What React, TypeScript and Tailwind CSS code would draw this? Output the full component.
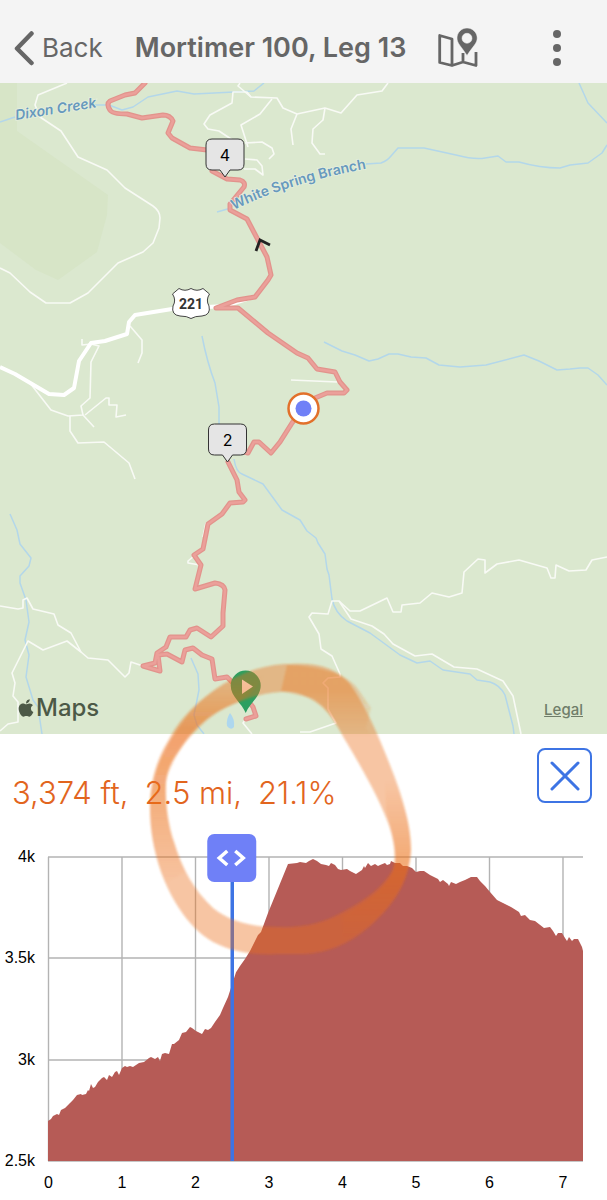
import { useState } from "react";
import { FaApple } from "react-icons/fa";

// chart scale, in svg units
const X0 = 48.5;
const Y0 = 1161;
const PX_PER_MILE = 73.5;
const PX_PER_FOOT = 101.4 / 500;

const MILES = [0, 1, 2, 3, 4, 5, 6, 7];
const ELEVATIONS = [
  { label: "4k", y: 857 },
  { label: "3.5k", y: 958 },
  { label: "3k", y: 1060 },
  { label: "2.5k", y: 1161 },
];

const PROFILE: [number, number][] = [
  [48, 1121], [51, 1119], [53, 1116], [57, 1114], [59, 1115], [61, 1110], [65, 1108], [70, 1103],
  [73, 1100], [77, 1095], [81, 1094], [82, 1095], [86, 1094], [88, 1090], [89, 1091], [91, 1084],
  [93, 1088], [95, 1087], [98, 1082], [102, 1078], [104, 1077], [107, 1080], [109, 1075], [112, 1077],
  [115, 1072], [117, 1071], [119, 1075], [122, 1068], [125, 1066], [127, 1067], [130, 1066], [133, 1067],
  [139, 1063], [144, 1062], [149, 1058], [151, 1057], [155, 1059], [158, 1057], [160, 1061], [162, 1054],
  [165, 1053], [169, 1054], [172, 1044], [174, 1044], [179, 1040], [182, 1033], [186, 1032], [190, 1027],
  [192, 1028], [196, 1031], [202, 1034], [205, 1029], [208, 1030], [211, 1028], [215, 1022], [220, 1015],
  [223, 1008], [228, 996.9], [236, 972.3], [240, 966], [245, 959], [250, 951], [258, 935], [261, 932],
  [268, 913], [288, 864], [297, 863], [300, 862], [306, 863], [309, 861], [313, 859], [317, 861],
  [321, 864], [326, 865], [329, 866], [331, 863], [335, 865], [338, 869], [341, 870], [347, 869],
  [350, 871], [356, 874], [362, 870], [364, 866], [365, 868], [368, 863], [371, 866], [375, 864],
  [378, 866], [380, 865], [385, 863], [387, 865], [390, 864], [391, 861], [395, 863], [400, 863],
  [403, 866], [407, 866], [412, 868], [416, 872], [420, 871], [424, 871], [430, 875], [438, 879],
  [440, 882], [443, 880], [448, 884], [449, 886], [451, 882], [456, 884], [460, 882], [465, 880],
  [471, 877], [477, 877], [480, 881], [485, 886], [490, 892], [497, 900], [503, 903], [511, 907],
  [519, 912], [521, 916], [525, 915], [530, 920], [535, 921], [544, 928], [550, 927], [553, 931],
  [556, 936], [558, 933], [562, 933], [565, 938], [567, 941], [569, 937], [572, 941], [574, 939],
  [578, 939], [580, 943], [582, 947], [583, 951],
];

const ROADS = [
  "M67 83 L38 95 L35 105 L40 117 L61 131 L78 157 L107 170 L125 188 L153 206 Q160 211 160 218 L159 228 L153 243 L143 252 L118 263 L88 293 L70 303 L46 303 L30 292 L10 273 L0 268",
  "M240 83 L238 86 L251 97 L277 98 L283 108 L297 114 L325 108 L341 113 L357 95 L382 91 L388 83",
  "M251 97 L247 92 L233 92 L232 103 L210 115 L204 124 L208 129 L219 131 L240 145",
  "M272 99 L260 114 L241 125 L248 147 M245 143 L262 142 L272 148 L274 154 L269 159",
  "M245 159 L257 160 L262 166 L263 175 L255 169 L244 169",
  "M297 114 L291 129 L293 145 M325 108 L323 120 L313 129 L312 143 L320 154 L325 154",
  "M30 383 L51 410 L68 416 L83 415 L81 406 L90 398 L91 362 L99 346 L91 344 L82 345 L82 339",
  "M70 416 L70 431 L78 443 L104 442 L129 463 L135 479 M83 415 L94 427 M85 415 L106 398 L109 398 L109 405 L117 405 L116 417 L126 415",
  "M130 326 L142 340 L142 353 L138 363 M291 380 L337 382",
  "M0 606 L18 609 L23 608 L23 600 L27 598 L33 609 L54 614 L58 625 L71 633 L81 652 L88 658 L108 660 L125 677 L129 673 L131 662 L143 666",
  "M81 652 L67 641 L43 650 L28 641 L12 673 L15 683 L13 696 L18 702 L18 722 L8 724 L0 731",
  "M206 523 L203 537 M194 556 L188 561 L188 563 L200 565",
  "M607 557 L592 560 L586 570 L569 571 L556 565 L555 578 L551 578 L547 568 L519 560 L497 564 L485 573 L485 560 L478 559 L464 572 L462 593 L449 597 L432 593 L420 603 L402 605 L401 612 L393 612 L387 598 L360 611 L350 611 L339 601 L332 601 L328 614 L312 613 L309 617 L319 634 L321 649 L332 656 L340 674 L340 677 L328 678 L323 683 L328 688 L328 709 L336 723 L310 732 L300 732",
  "M339 601 L351 619 L372 626 L384 634 L393 644 L415 656 L432 654 L454 667 L477 669 L503 681 L513 696 L521 734",
  "M246 719 L243 723 L252 734",
];

const STREAMS = [
  "M0 122 L15 117 M95 105 L109 105 L122 110 L133 107 L148 97 L177 91 L194 94 L254 91 L264 83",
  "M217 212 L231 208 M366 164 L381 163 Q387 161 391 156 L398 148 L424 148 L456 155 Q475 160 485 158 L498 156 L506 162 L519 162 Q540 168 560 168 L570 165 L588 163 L602 153 L607 145 M579 83 L588 103 L607 123",
  "M324 342 L342 351 L355 355 L369 361 L378 359 L389 354 L398 354 L411 357 L426 358 L439 365 L460 367 L486 365 L524 355 L539 361 L557 370 L570 369 L580 368 L588 368 L598 375 L607 385",
  "M202 336 Q207 362 215 383 L219 407 L219 425 M234 459 Q236 472 242 474 L263 484 L282 510 L300 520 L307 531 L316 538 L318 543 L325 554 L327 569 L329 575 L332 599 Q335 613 347 621 L370 633 L385 644 L400 655 L417 663 L430 661 L443 670 L470 674 L477 680 L490 682 Q500 685 505 695 L513 726 L514 734",
  "M10 514 L17 530 L20 544 L31 558 L29 566 L20 576 L20 583 L26 600 L29 622 L25 640 L29 655 L26 677 L33 700 L38 707 L42 734",
  "M191 658 L198 674 L199 690 L194 715 L197 725 L204 734",
];

const ROUTE = [
  "M145 83 L135 93 L125 95 L110 101 Q106 104 110 110 Q112 114 127 114 L142 118 L163 115 Q170 115 173 121 L168 133 L172 138 L190 148 L207 150 L218 160 L212 171 L227 179 L240 180 Q246 182 244 187 L230 204 L230 210 L247 219 L258 240 L267 257 L271 275 L268 280 L255 297 L237 300 L216 308 L238 308 L268 333 L297 353 L308 358 L317 369 L335 372 L340 382 L347 390 L344 393 L327 393 L315 398 L303 408 L292 423 L280 442 L271 453 L259 442 L254 442 L248 453 L238 450",
  "M228 462 L237 480 L239 492 L245 500 L243 502 L230 503 L222 514 L208 524 L203 549 L194 555 L201 565 L195 589 L215 583 Q224 584 225 590 L223 613 L223 626 L211 637 L197 628 L190 630 L186 637 L170 637 L166 647 L157 653 L155 663 L143 666 L160 671 L158 655 L167 654 L182 662 L185 650 L193 648 L202 655 L212 659 L215 679 L227 677 L240 690 L253 707 L256 716 L246 719",
];

function elevationAt(mile: number) {
  const x = X0 + mile * PX_PER_MILE;
  const found = PROFILE.findIndex((p) => p[0] > x);
  const i = found < 1 ? PROFILE.length - 1 : found;
  const [x1, y1] = PROFILE[i - 1];
  const [x2, y2] = PROFILE[i];
  const y = y1 + ((y2 - y1) * (x - x1)) / (x2 - x1);
  const feet = 2500 + (Y0 - y) / PX_PER_FOOT;
  const rise = (y1 - y2) / PX_PER_FOOT;
  const run = ((x2 - x1) / PX_PER_MILE) * 5280;
  return { feet: Math.round(feet), grade: (rise / run) * 100 };
}

function Header() {
  return (
    <header className="flex h-[83px] items-center bg-[#f4f4f4] pt-3 pl-3.5 pr-10 text-[#666]">
      <button type="button" className="flex items-center gap-2 text-[26px] leading-8">
        <svg className="h-9 w-5" viewBox="0 0 20 36" fill="none" stroke="currentColor" strokeWidth="4.500" strokeLinecap="round" strokeLinejoin="round" aria-hidden="true">
          <path d="M17.500 3.500 L3 18.500 L17.500 33" />
        </svg>
        Back
      </button>
      <h1 className="ml-8 whitespace-nowrap text-[27px] font-semibold leading-8">Mortimer 100, Leg 13</h1>
      <button type="button" aria-label="Map view" className="ml-8">
        <svg className="h-10 w-10" viewBox="440 27 40 40" aria-hidden="true">
          <path
            d="M441.700 34.500 L454 38 V64.500 L441.700 61.500 Z M454 64.500 L465 61 L478 64.500 V51 M465 61 V52"
            fill="none"
            stroke="currentColor"
            strokeWidth="2.800"
            strokeLinejoin="round"
          />
          <path
            d="M469 27 C463.500 27 459 31.500 459 37 C459 42.500 463 45 469 54.500 C475 45 479.200 42.500 479.200 37 C479.200 31.500 474.500 27 469 27 Z M469 32.300 A5 5 0 1 1 469 42.300 A5 5 0 1 1 469 32.300 Z"
            fill="currentColor"
            stroke="#f4f4f4"
            strokeWidth="0.500"
            fillRule="evenodd"
          />
        </svg>
      </button>
      <button type="button" aria-label="More" className="ml-auto flex w-5 flex-col items-center gap-[6px]">
        <span className="size-2 rounded-full bg-current" />
        <span className="size-2 rounded-full bg-current" />
        <span className="size-2 rounded-full bg-current" />
      </button>
    </header>
  );
}

function MileMarker({ x, y, mile }: { x: number; y: number; mile: number }) {
  return (
    <g transform={`translate(${x} ${y})`}>
      <path
        d="M-13 -38 H13 Q19 -38 19 -32 V-13 Q19 -7 13 -7 H5 L0 0 L-5 -7 H-13 Q-19 -7 -19 -13 V-32 Q-19 -38 -13 -38 Z"
        fill="#e5e5e5"
        stroke="#333"
      />
      <text x="0" y="-16" textAnchor="middle" className="fill-black text-[16px]">
        {mile}
      </text>
    </g>
  );
}

function RouteMap() {
  return (
    <section className="relative">
      <svg className="block w-full" viewBox="0 83 607 651" role="img" aria-label="Route map">
        <defs>
          <path id="spring-branch" d="M234 210 Q288 183 370 168" />
        </defs>
        <rect y="83" width="607" height="651" fill="#dbe8cf" />
        <path d="M0 83 H17 V131 L108 195 L107 215 L97 252 L58 280 L36 270 L0 243 Z" fill="#d7e5c7" />
        <g fill="none" stroke="#b3d7ea" strokeWidth="1.500" strokeLinejoin="round">
          {STREAMS.map((d) => (
            <path key={d} d={d} />
          ))}
        </g>
        <path d="M230 713 Q226 719 227 726 Q231 731 234 727 Q235 719 230 713 Z" fill="#aed7ee" />
        <g fill="none" stroke="#f8faf5" strokeWidth="1.600" strokeLinejoin="round">
          {ROADS.map((d) => (
            <path key={d} d={d} />
          ))}
        </g>
        <path
          d="M0 367 L15 374 L49 394 L64 395 L74 388 L79 361 L91 343 L105 341 L127 334 L129 322 L135 315 L172 309 L225 306 L253 297"
          fill="none"
          stroke="#fff"
          strokeWidth="4"
          strokeLinejoin="round"
        />
        <g fill="none" strokeLinejoin="round" strokeLinecap="round">
          {ROUTE.map((d) => (
            <path key={d} d={d} stroke="#e2938c" strokeWidth="5" />
          ))}
          {ROUTE.map((d) => (
            <path key={d} d={d} stroke="#eba09a" strokeWidth="2.500" />
          ))}
        </g>
        <path d="M256 251 L260 240 L270 245" fill="none" stroke="#222" strokeWidth="2.800" />

        <g className="fill-[#6799bd] text-[14px] font-semibold" stroke="#e6efdf" strokeWidth="1.500" paintOrder="stroke">
          <text transform="translate(16 120) rotate(-9)" className="italic">
            Dixon Creek
          </text>
          <text>
            <textPath href="#spring-branch">White Spring Branch</textPath>
          </text>
        </g>

        <path
          d="M179 288.500 Q185 292 191 288.500 Q197 292 203 288.500 L209.500 294 Q205.500 300 209 306 Q211 315 202 316 Q195 316 191 318.500 Q187 316 180 316 Q171 315 173 306 Q176.500 300 172.500 294 Z"
          fill="#fff"
          stroke="#444"
        />
        <text x="191" y="308.500" textAnchor="middle" className="fill-[#333] font-['Roboto',sans-serif] text-[14px] font-bold">
          221
        </text>

        <MileMarker x={225} y={177} mile={4} />
        <MileMarker x={227.5} y={462} mile={2} />

        <circle cx="303.500" cy="408.500" r="15" fill="#fff" stroke="#e2702a" strokeWidth="2.500" />
        <circle cx="303.500" cy="408.500" r="8" fill="#6f80f7" />

        <path
          d="M245.700 713 C242 703 230.700 697 230.700 685.500 A15 15 0 0 1 260.700 685.500 C260.700 697 249.500 703 245.700 713 Z"
          fill="#2c9f60"
        />
        <path d="M242 679.500 L253 686.500 L242 694 Z" fill="#fff" />
      </svg>
      <div className="absolute bottom-2.5 left-4 flex items-center text-[24px] font-medium leading-8 text-[#4c5947]">
        <FaApple className="size-5" aria-hidden="true" />
        <span>Maps</span>
      </div>
      <a href="#legal" className="absolute bottom-3 right-6 text-[15px] font-medium leading-6 text-[#6f7d69] underline">
        Legal
      </a>
    </section>
  );
}

function ElevationChart({ mile, onChange }: { mile: number; onChange: (mile: number) => void }) {
  const x = X0 + mile * PX_PER_MILE;
  const area = "M48 1161 " + PROFILE.map(([px, py]) => `L${px} ${py}`).join(" ") + " V1161 Z";

  return (
    <div className="relative">
      <svg className="block w-full" viewBox="0 803 607 397" role="img" aria-label="Elevation profile">
        <g stroke="#b3b3b3" strokeWidth="1.400">
          {ELEVATIONS.map((e) => (
            <line key={e.label} x1="48" x2="583" y1={e.y} y2={e.y} />
          ))}
          {MILES.map((m) => (
            <line key={m} x1={X0 + m * PX_PER_MILE} x2={X0 + m * PX_PER_MILE} y1="857" y2="1161" />
          ))}
        </g>
        <path d={area} fill="#b65b56" />
        <g className="fill-black font-['Liberation_Sans',Arial,sans-serif] text-[16px]">
          {ELEVATIONS.map((e) => (
            <text key={e.label} x="35" y={e.y + 5} textAnchor="end">
              {e.label}
            </text>
          ))}
          {MILES.map((m) => (
            <text key={m} x={X0 + m * PX_PER_MILE} y="1188" textAnchor="middle">
              {m}
            </text>
          ))}
        </g>
        <line x1={x} x2={x} y1="858" y2="1161" stroke="#3d74e4" strokeWidth="3.500" />
        <rect x={x - 25} y="834" width="49" height="48" rx="7" fill="#6f80f7" />
        <path
          transform={`translate(${x - 1} 858)`}
          d="M-4 -7 L-12 0 L-4 7 M4 -7 L12 0 L4 7"
          fill="none"
          stroke="#fff"
          strokeWidth="3.500"
        />
      </svg>
      <input
        type="range"
        aria-label="Position along route"
        min={0}
        max={7.27}
        step={0.01}
        value={mile}
        onChange={(e) => onChange(Number(e.target.value))}
        className="absolute top-[30px] left-[4%] h-12 w-[96%] cursor-ew-resize opacity-0"
      />
    </div>
  );
}

// Hand-drawn highlight laid over the map and the chart
function Highlight() {
  return (
    <svg className="pointer-events-none absolute top-0 left-0 w-full" viewBox="0 0 607 1200" fill="#ec6f1a" aria-hidden="true">
      <defs>
        <filter id="soft" x="-10%" y="-10%" width="120%" height="120%">
          <feGaussianBlur stdDeviation="1.200" />
        </filter>
        <linearGradient id="fade-left" x1="0" y1="675" x2="0" y2="890" gradientUnits="userSpaceOnUse">
          <stop offset="0" stopColor="#ec6f1a" stopOpacity="0" />
          <stop offset="0.250" stopColor="#ec6f1a" stopOpacity="0.420" />
          <stop offset="0.500" stopColor="#ec6f1a" stopOpacity="0.300" />
          <stop offset="1" stopColor="#ec6f1a" stopOpacity="0" />
        </linearGradient>
        <linearGradient id="fade-top" x1="0" y1="690" x2="0" y2="738" gradientUnits="userSpaceOnUse">
          <stop offset="0" stopColor="#ec6f1a" stopOpacity="0.280" />
          <stop offset="1" stopColor="#ec6f1a" stopOpacity="0" />
        </linearGradient>
        <linearGradient id="fade-right" x1="0" y1="780" x2="0" y2="940" gradientUnits="userSpaceOnUse">
          <stop offset="0" stopColor="#ec6f1a" stopOpacity="0" />
          <stop offset="0.500" stopColor="#ec6f1a" stopOpacity="0.300" />
          <stop offset="1" stopColor="#ec6f1a" stopOpacity="0" />
        </linearGradient>
      </defs>
      <g filter="url(#soft)">
        <path
          fillRule="evenodd"
          opacity="0.400"
          d="M290 664 C318 662 337 668 350 684 C364 703 378 734 390 765 C399 788 411 820 411 850 C409 885 391 907 370 926 C350 944 326 953 305 954 L277 954 C255 955 235 953 213 942 C186 926 170 896 161 872 C153 848 150 828 150 807 C150 785 155 762 168 741 C177 723 190 709 205 697 C229 678 258 664 290 664 Z
             M280 692 C260 693 242 700 227 707 C207 716 194 728 183 744 C174 757 167 767 166 782 C165 805 168 826 174 842 C182 869 194 890 213 908 C232 923 255 927 277 927 C302 928 322 924 343 912 C366 900 384 886 392 871 C398 858 393 835 387 820 C377 794 361 767 347 743 C335 722 328 707 307 697 C298 692 290 691 280 692 Z"
        />
        <path
          fill="url(#fade-left)"
          d="M270 667 C240 672 210 691 193 709 C174 731 151 765 150 807 C150 840 158 864 166 883 L186 872 C172 845 164 805 166 782 C170 760 194 724 227 707 C242 700 250 696 258 684 Z"
        />
        <path
          fill="url(#fade-right)"
          d="M384 765 C400 790 411 820 411 850 C409 885 391 907 370 926 L343 940 L343 916 C366 903 387 888 394 868 C398 855 393 835 386 810 Z"
        />
        <path fill="url(#fade-top)" d="M287 665 C315 666 345 672 357 688 L371 708 L366 728 L372 738 L344 738 C332 715 318 697 307 697 L281 691 Z" />
      </g>
    </svg>
  );
}

export default function App() {
  const [mile, setMile] = useState(2.5);
  const { feet, grade } = elevationAt(mile);

  return (
    <main className="relative overflow-hidden bg-white font-['Inter',sans-serif]">
      <Header />
      <RouteMap />
      <section>
        <div className="flex items-end justify-between pt-3.5 pr-[15px] pl-3">
          <p className="flex gap-4 whitespace-nowrap text-[31px] leading-5 font-light text-[#e2651e]">
            <span>{feet.toLocaleString("en-US")} ft,</span>
            <span>{mile.toFixed(1)} mi,</span>
            <span>{grade.toFixed(1)}%</span>
          </p>
          <button
            type="button"
            aria-label="Close elevation profile"
            className="flex size-[55px] items-center justify-center rounded-lg border-2 border-[#3d74e4] text-[#3d74e4]"
          >
            <svg className="size-8" viewBox="0 0 32 32" stroke="currentColor" strokeWidth="3" strokeLinecap="round" aria-hidden="true">
              <path d="M3 3 L29 29 M29 3 L3 29" />
            </svg>
          </button>
        </div>
        <ElevationChart mile={mile} onChange={setMile} />
      </section>
      <Highlight />
    </main>
  );
}
